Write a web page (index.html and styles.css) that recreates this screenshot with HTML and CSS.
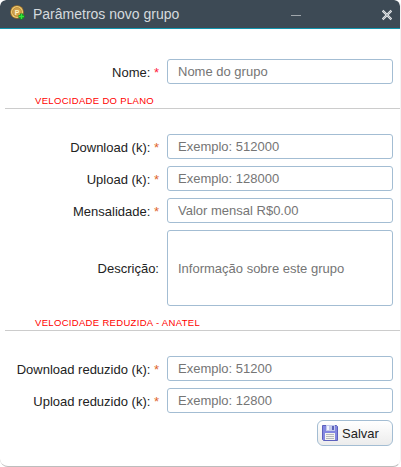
FILE: index.html
```html
<!DOCTYPE html>
<html lang="pt-BR">
<head>
<meta charset="utf-8">
<title>Parâmetros novo grupo</title>
<link rel="stylesheet" href="styles.css">
</head>
<body>
<main class="window">
  <header class="titlebar">
    <svg class="coin" width="16" height="16" viewBox="0 0 16 16">
      <circle cx="7" cy="7" r="6.8" fill="#a87524"/>
      <circle cx="7" cy="7" r="6" fill="#efce7b"/>
      <circle cx="7" cy="7" r="4.5" fill="#d0a04a" stroke="#b98a36" stroke-width=".8"/>
      <text x="7" y="9.6" text-anchor="middle" class="coin-letter">P</text>
      <path d="M11.500 8.500v6M8.500 11.500h6" stroke="#128a1c" stroke-width="3"/>
      <path d="M11.500 9v5M9 11.500h5" stroke="#35e43c" stroke-width="1.400"/>
    </svg>
    <h1 class="title">Parâmetros novo grupo</h1>
    <span class="minimize"></span>
    <svg class="close" width="12" height="12" viewBox="0 0 12 12">
      <path d="M1.600 1.600l8.800 8.800M10.400 1.600l-8.800 8.800" stroke="#e4e7e9" stroke-width="2.200"/>
      <path d="M2 2l8 8M10 2l-8 8" stroke="#99a1a7" stroke-width=".7"/>
    </svg>
  </header>
  <form class="form">
    <div class="row"><label class="label">Nome: <span class="req pink">*</span></label><input class="field" placeholder="Nome do grupo"></div>
    <h2 class="section">VELOCIDADE DO PLANO</h2>
    <div class="row"><label class="label">Download (k): <span class="req">*</span></label><input class="field" placeholder="Exemplo: 512000"></div>
    <div class="row"><label class="label">Upload (k): <span class="req">*</span></label><input class="field" placeholder="Exemplo: 128000"></div>
    <div class="row"><label class="label">Mensalidade: <span class="req">*</span></label><input class="field" placeholder="Valor mensal R$0.00"></div>
    <div class="row"><label class="label">Descrição:</label><input class="field tall" placeholder="Informação sobre este grupo"></div>
    <h2 class="section">VELOCIDADE REDUZIDA - ANATEL</h2>
    <div class="row"><label class="label">Download reduzido (k): <span class="req">*</span></label><input class="field" placeholder="Exemplo: 51200"></div>
    <div class="row"><label class="label">Upload reduzido (k): <span class="req">*</span></label><input class="field" placeholder="Exemplo: 12800"></div>
    <button class="save" type="button">
      <svg width="16" height="16" viewBox="0 0 16 16">
        <path d="M.5.5h14l1 1v14H1.500l-1-1z" fill="#8387e0" stroke="#5c60bd"/>
        <path d="M4 0h9v6H4z" fill="#c3c9ec"/>
        <path d="M5 1h2v4H5z" fill="#f2f4ff"/>
        <path d="M10 1h2v4h-2z" fill="#5c62b8"/>
        <path d="M3 8h10v7H3z" fill="#f4f4ee"/>
        <path d="M4 9.500h8M4 11.500h8M4 13.500h8" stroke="#b4b6bc"/>
      </svg>
      <span>Salvar</span>
    </button>
  </form>
</main>
</body>
</html>
```
FILE: styles.css
```css
* { box-sizing: border-box; }
body {
  margin: 0;
  background: #fff;
  font-family: "Liberation Sans", Arial, sans-serif;
  font-size: 13px;
  color: #222;
}
.window {
  width: 401px;
  height: 467px;
  background: #fff;
  border-right: 1px solid #f4f4f4;
  border-bottom: 1px solid #bdbdbd;
  border-radius: 6px 6px 8px 8px;
  overflow: hidden;
}
.titlebar {
  display: flex;
  align-items: center;
  height: 29px;
  padding: 0 7px 0 10px;
  background: #3d4a55;
  border-bottom: 1px solid #1395ad;
  border-radius: 6px 6px 0 0;
}
.coin { margin-top: -2px; }
.coin-letter { font: bold 7px "Liberation Sans", Arial, sans-serif; fill: #fff3c4; }
.title {
  margin: 0 auto 0 7px;
  padding-bottom: 1px;
  font-size: 14px;
  font-weight: 400;
  line-height: 16px;
  color: #d5dade;
}
.minimize { width: 10px; height: 1px; margin: 3px 80px 0 0; background: #a0a7ac; }
.close { margin-top: 2px; }
.form { display: flex; flex-direction: column; padding: 30px 7px 0 0; }
.row { display: flex; align-items: center; margin-bottom: 7px; }
.label {
  width: 159px;
  margin-right: 8px;
  padding-top: 2px;
  text-align: right;
  white-space: nowrap;
  line-height: 16px;
}
.req { color: #e0662a; }
.pink { color: #ff2040; }
.field {
  width: 226px;
  height: 25px;
  padding: 0 10px;
  border: 1px solid #a3bdd3;
  border-radius: 3px;
  background: #fff;
  font: inherit;
  outline: 0;
}
.field::placeholder { color: #757575; opacity: 1; }
.tall { height: 76px; }
.section {
  height: 18px;
  margin: 0 -7px 25px 5px;
  padding: 4px 0 0 30px;
  border-bottom: 1px solid #ccc;
  font-size: 9.5px;
  font-weight: 400;
  line-height: 12px;
  letter-spacing: .32px;
  color: #f00;
}
.save {
  display: flex;
  align-items: center;
  gap: 4px;
  align-self: flex-end;
  width: 76px;
  height: 26px;
  padding: 0 4px;
  border: 1px solid #a3bdd3;
  border-radius: 6px;
  background: linear-gradient(#fff, #ececec);
  font: inherit;
  color: #222;
}
```
